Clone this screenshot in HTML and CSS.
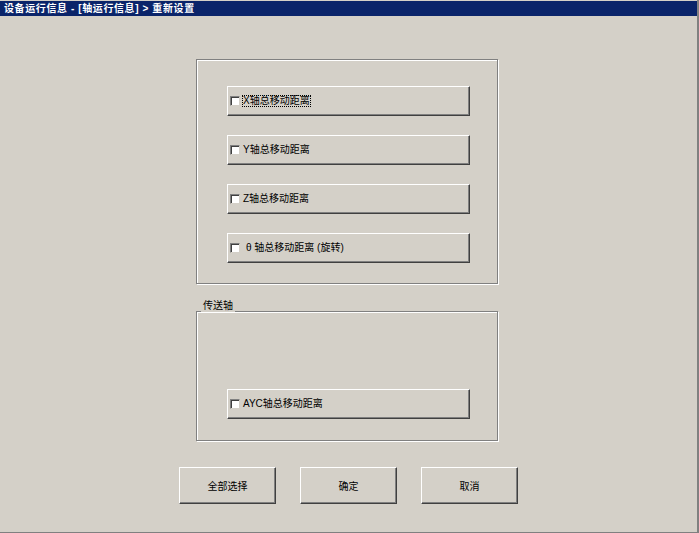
FILE: index.html
```html
<!DOCTYPE html>
<html lang="zh-CN">
<head>
  <meta charset="UTF-8">
  <meta name="viewport" content="width=device-width, initial-scale=1.0">
  <link rel="stylesheet" href="styles.css">
</head>
<body>
  <div class="window">
    <div class="titlebar">设备运行信息 - [轴运行信息] &gt; 重新设置</div>
    <div class="client">
      <div class="group group-axes">
        <button class="check-btn"><span class="box"></span><span class="label focused">X轴总移动距离</span></button>
        <button class="check-btn"><span class="box"></span><span class="label">Y轴总移动距离</span></button>
        <button class="check-btn"><span class="box"></span><span class="label">Z轴总移动距离</span></button>
        <button class="check-btn"><span class="box"></span><span class="label label-indent">θ 轴总移动距离 (旋转)</span></button>
      </div>
      <div class="group group-conveyor">
        <span class="group-title">传送轴</span>
        <button class="check-btn"><span class="box"></span><span class="label">AYC轴总移动距离</span></button>
      </div>
      <div class="actions">
        <button class="push-btn">全部选择</button>
        <button class="push-btn">确定</button>
        <button class="push-btn">取消</button>
      </div>
    </div>
  </div>
</body>
</html>
```

FILE: styles.css
```css
:root {
  --face: #d4d0c8;
  --shadow: #808080;
  --dark: #404040;
  --navy: #0a246a;
}

body {
  margin: 0;
  background-color: var(--face);
  font-family: "Liberation Sans", "Noto Sans CJK SC", sans-serif;
  font-size: 10px;
  color: #000;
}

.window {
  width: 699px;
  height: 533px;
  box-sizing: border-box;
  padding-top: 1px;
  background-color: var(--face);
  border-right: 2px solid var(--shadow);
  border-bottom: 1px solid var(--shadow);
}

.titlebar {
  height: 15px;
  line-height: 15px;
  padding-left: 4px;
  background-color: var(--navy);
  color: #fff;
  font-weight: bold;
  letter-spacing: 0.6px;
  white-space: pre;
}

.client {
  display: flex;
  flex-direction: column;
}

.group {
  position: relative;
  width: 302px;
  margin-left: 196px;
  box-sizing: border-box;
  border: 1px solid var(--shadow);
  box-shadow: inset 1px 1px 0 #fff, 1px 1px 0 #fff;
  display: flex;
  flex-direction: column;
  padding-left: 30px;
}

.group-axes {
  margin-top: 43px;
  height: 225px;
  padding-top: 26px;
  gap: 19px;
}

.group-conveyor {
  margin-top: 27px;
  height: 130px;
  padding-top: 77px;
}

.group-title {
  position: absolute;
  top: -12px;
  left: 4px;
  padding: 0 2px;
  line-height: 12px;
  background-color: var(--face);
}

button {
  font-family: inherit;
  font-size: 10px;
  color: #000;
  background-color: var(--face);
  border: 1px solid;
  border-color: #fff var(--dark) var(--dark) #fff;
  box-shadow: inset -1px -1px 0 var(--shadow);
  padding: 0;
  margin: 0;
  cursor: pointer;
}

.check-btn {
  width: 243px;
  height: 30px;
  display: flex;
  align-items: center;
  padding-left: 2px;
  text-align: left;
}

.box {
  width: 10px;
  height: 10px;
  box-sizing: border-box;
  background-color: #fff;
  border: 1px solid;
  border-color: var(--shadow) var(--face) var(--face) var(--shadow);
  box-shadow: inset 1px 1px 0 var(--dark);
  flex-shrink: 0;
}

.label {
  margin-left: 3px;
  line-height: 10px;
  white-space: pre;
}

.label-indent {
  margin-left: 6px;
}

.focused {
  outline: 1px dotted #000;
}

.actions {
  display: flex;
  justify-content: center;
  gap: 24px;
  margin-top: 26px;
}

.push-btn {
  width: 97px;
  height: 37px;
}
```
